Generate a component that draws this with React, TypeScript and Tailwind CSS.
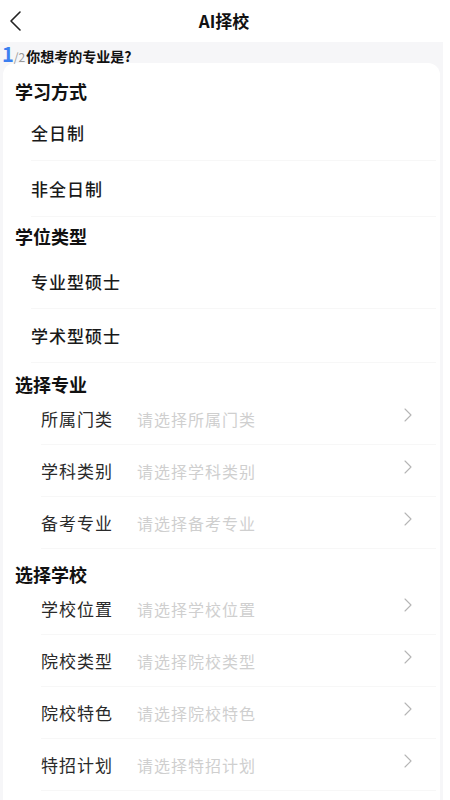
import { ChevronRight } from "lucide-react";

const font = { fontFamily: '"Noto Sans CJK SC", "Noto Sans", sans-serif' };

function OptionRow({ label, h }: { label: string; h: string }) {
  return (
    <div className={`${h} ml-4 mr-1 flex items-center border-b border-[#f7f7f7]`}>
      <span className="text-[17px] font-medium text-[#1a1a1a] tracking-[1px]">{label}</span>
    </div>
  );
}

function SelectRow({ label, placeholder }: { label: string; placeholder: string }) {
  return (
    <div className="h-[52px] ml-[26px] mr-1 flex items-center border-b border-[#f7f7f7]">
      <span className="w-[96px] text-[17px] text-[#2a2a2a] tracking-[1px]">{label}</span>
      <span className="flex-1 text-[16px] text-[#cfcfcf] tracking-[1px]">{placeholder}</span>
      <ChevronRight size={24} strokeWidth={1.1} className="mr-[16px] -mt-2 text-[#b5b5b5]" />
    </div>
  );
}

export default function App() {
  return (
    <div className="min-h-screen w-[450px] bg-white" style={font}>
      {/* Header */}
      <div className="h-[42px] flex items-center pl-[9px] pr-[4px] bg-white">
        <svg width="13" height="22" viewBox="0 0 13 22" fill="none" className="text-[#222]">
          <polyline points="11,2 2,11 11,20" stroke="currentColor" strokeWidth="1.6" strokeLinecap="round" strokeLinejoin="round" />
        </svg>
        <div className="flex-1 text-center text-[17px] font-bold text-[#111] pr-[20px]">AI择校</div>
      </div>

      <div className="bg-[#f6f6f8] w-[443px] min-h-[758px]">
        {/* Step line */}
        <div className="h-[21px] flex items-end pl-[2px] leading-none">
          <span className="text-[20px] font-bold text-[#3c7ff0] -mb-[1px]">1</span>
          <span className="text-[12px] text-[#999] mr-[1px]">/2</span>
          <span className="text-[14px] font-bold text-[#111]">你想考的专业是?</span>
        </div>

        {/* Card */}
        <div className="ml-[3px] w-[437px] min-h-[737px] bg-white rounded-t-[12px] pl-[12px]">
          <div className="pt-[14px] leading-[28px] text-[18px] font-bold text-[#111]">学习方式</div>
          <OptionRow label="全日制" h="h-[56px]" />
          <OptionRow label="非全日制" h="h-[56px]" />

          <div className="h-[38px] leading-[38px] text-[18px] font-bold text-[#111]">学位类型</div>
          <OptionRow label="专业型硕士" h="h-[54px]" />
          <OptionRow label="学术型硕士" h="h-[54px]" />

          <div className="pt-[12px] leading-[18px] text-[18px] font-bold text-[#111]">选择专业</div>
          <SelectRow label="所属门类" placeholder="请选择所属门类" />
          <SelectRow label="学科类别" placeholder="请选择学科类别" />
          <SelectRow label="备考专业" placeholder="请选择备考专业" />

          <div className="pt-[16px] leading-[18px] text-[18px] font-bold text-[#111]">选择学校</div>
          <SelectRow label="学校位置" placeholder="请选择学校位置" />
          <SelectRow label="院校类型" placeholder="请选择院校类型" />
          <SelectRow label="院校特色" placeholder="请选择院校特色" />
          <SelectRow label="特招计划" placeholder="请选择特招计划" />
        </div>
      </div>
    </div>
  );
}
